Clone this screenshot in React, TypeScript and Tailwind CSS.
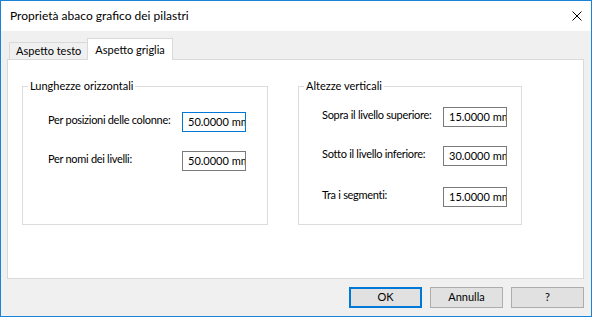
const font = { fontFamily: 'Lato, "Liberation Sans", sans-serif' }

function Field({ value, focused }: { value: string; focused?: boolean }) {
  return (
    <div
      className={`w-[64px] h-[20px] flex items-center pl-[5px] overflow-hidden whitespace-nowrap bg-white border ${
        focused ? 'border-[#0078d7]' : 'border-[#7a7a7a]'
      }`}
    >
      {value}
    </div>
  )
}

function Row({ label, value, labelW, focused, className }: { label: string; value: string; labelW: string; focused?: boolean; className?: string }) {
  return (
    <div className={`flex items-start ${className ?? ''}`}>
      <div className={`${labelW} leading-[14px] pt-[1px] whitespace-nowrap tracking-[-0.3px]`}>{label}</div>
      <Field value={value} focused={focused} />
    </div>
  )
}

function Button({ children, primary }: { children: React.ReactNode; primary?: boolean }) {
  return (
    <div
      className={`w-[73px] h-[21px] flex items-center justify-center bg-[#e1e1e1] ${
        primary ? 'border-2 border-[#0078d7]' : 'border border-[#adadad]'
      }`}
    >
      {children}
    </div>
  )
}

export default function App() {
  return (
    <div
      className="w-[592px] h-[317px] flex flex-col border border-[#1883d7] bg-[#f0f0f0] text-[11px] text-black overflow-hidden"
      style={font}
    >
      {/* title bar */}
      <div className="h-[30px] shrink-0 bg-white flex items-center justify-between pl-[9px] pr-[9px] text-[12px]">
        <span>Proprietà abaco grafico dei pilastri</span>
        <svg width="10" height="10" viewBox="0 0 10 10">
          <path d="M0.5 0.5 L9.5 9.5 M9.5 0.5 L0.5 9.5" stroke="#000" strokeWidth="1" />
        </svg>
      </div>

      <div className="flex flex-col pl-[6px] pr-[7px] pt-[7px]">
        {/* tabs */}
        <div className="flex items-end h-[21px] pl-[2px]">
          <div className="h-[17px] flex items-center px-[6px] border-t border-l border-[#d9d9d9] bg-[#f0f0f0]">
            Aspetto testo
          </div>
          <div className="h-[22px] -mb-px relative flex items-start pt-[3px] px-[7px] border-t border-l border-r border-[#d9d9d9] bg-white">
            Aspetto griglia
          </div>
        </div>

        {/* panel */}
        <div className="h-[220px] border border-[#d9d9d9] bg-white flex items-start gap-[30px] pl-[14px] pt-[19px]">
          <fieldset className="w-[246px] h-[146px] border border-[#dcdcdc]">
            <legend className="ml-[5px] px-[2px] leading-[14px]">Lunghezze orizzontali</legend>
            <div className="pl-[25px] pt-[19px] flex flex-col gap-[19px]">
              <Row label="Per posizioni delle colonne:" value="50.0000 mm" labelW="w-[134px]" focused />
              <Row label="Per nomi dei livelli:" value="50.0000 mm" labelW="w-[134px]" />
            </div>
          </fieldset>

          <fieldset className="w-[224px] h-[146px] border border-[#dcdcdc]">
            <legend className="ml-[5px] px-[2px] leading-[14px]">Altezze verticali</legend>
            <div className="pl-[23px] pt-[14px] flex flex-col">
              <Row label="Sopra il livello superiore:" value="15.0000 mm" labelW="w-[121px]" />
              <Row label="Sotto il livello inferiore:" value="30.0000 mm" labelW="w-[121px]" className="mt-[19px]" />
              <Row label="Tra i segmenti:" value="15.0000 mm" labelW="w-[121px]" className="mt-[21px]" />
            </div>
          </fieldset>
        </div>

        {/* buttons */}
        <div className="flex justify-end gap-[8px] mt-[8px]">
          <Button primary>OK</Button>
          <Button>Annulla</Button>
          <Button>?</Button>
        </div>
      </div>
    </div>
  )
}
